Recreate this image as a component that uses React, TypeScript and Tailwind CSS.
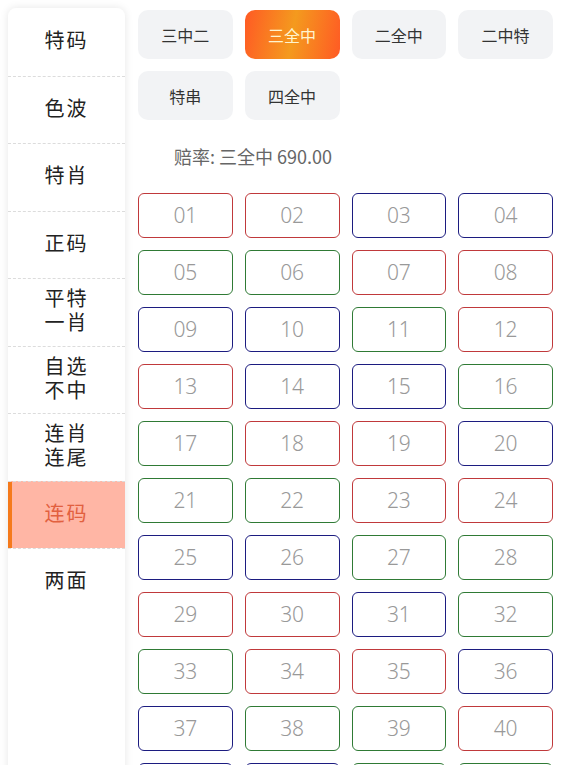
import { useState } from 'react';

const menu = ['特码', '色波', '特肖', '正码', '平特\n一肖', '自选\n不中', '连肖\n连尾', '连码', '两面'];
const tabs = ['三中二', '三全中', '二全中', '二中特', '特串', '四全中'];

const red = [1, 2, 7, 8, 12, 13, 18, 19, 23, 24, 29, 30, 34, 35, 40, 45, 46];
const blue = [3, 4, 9, 10, 14, 15, 20, 25, 26, 31, 36, 37, 41, 42, 47, 48];

function borderFor(n: number) {
  if (red.includes(n)) return 'border-[#c0393b]';
  if (blue.includes(n)) return 'border-[#1c1c80]';
  return 'border-[#2f7a35]';
}

export default function App() {
  const [activeMenu, setActiveMenu] = useState(7);
  const [activeTab, setActiveTab] = useState(1);

  return (
    <div
      className="flex min-h-screen bg-white"
      style={{ fontFamily: '"Noto Sans CJK SC", "Noto Sans", sans-serif' }}
    >
      {/* Sidebar */}
      <div className="pl-2 pt-2 shrink-0 flex">
        <div className="w-[117px] bg-white rounded-t-lg shadow-[0_0_8px_rgba(0,0,0,0.1)]">
          {menu.map((m, i) => (
            <button
              key={m}
              onClick={() => setActiveMenu(i)}
              className={`relative w-full h-[67.5px] flex items-center justify-center pb-1 text-[20px] leading-[24px] whitespace-pre-line ${
                i > 0 ? 'border-t border-dashed border-[#dcdcdc]' : ''
              } ${activeMenu === i ? 'bg-[#ffb6a5] text-[#e2603f]' : 'text-[#222]'}`}
            >
              {activeMenu === i && <span className="absolute left-0 top-0 bottom-0 w-1 bg-[#f57a1c]" />}
              <span className="tracking-[2px] text-center">{m}</span>
            </button>
          ))}
        </div>
      </div>

      {/* Content */}
      <div className="flex-1 pl-[13px] pr-[21px] pt-[10px]">
        <div className="grid grid-cols-4 gap-3">
          {tabs.map((t, i) => (
            <button
              key={t}
              onClick={() => setActiveTab(i)}
              className={`h-[49px] rounded-[10px] text-[16px] ${
                activeTab === i
                  ? 'bg-[linear-gradient(100deg,#ff5a24_0%,#f49a1e_50%,#ff5a24_100%)] text-[#fff4cf]'
                  : 'bg-[#f2f3f5] text-[#333]'
              }`}
            >
              {t}
            </button>
          ))}
        </div>

        <div className="pl-9 pt-[23px] h-[73px] text-[18px] text-[#666] leading-[26px]">
          赔率: {tabs[activeTab]} 690.00
        </div>

        <div className="grid grid-cols-4 gap-x-3 gap-y-3 pb-4">
          {Array.from({ length: 49 }, (_, k) => k + 1).map(n => (
            <button
              key={n}
              className={`h-[45px] rounded-[6px] border ${borderFor(n)} bg-white text-[21px] font-light text-[#999]`}
              style={{ fontFamily: '"Noto Sans", sans-serif' }}
            >
              {String(n).padStart(2, '0')}
            </button>
          ))}
        </div>
      </div>
    </div>
  );
}
